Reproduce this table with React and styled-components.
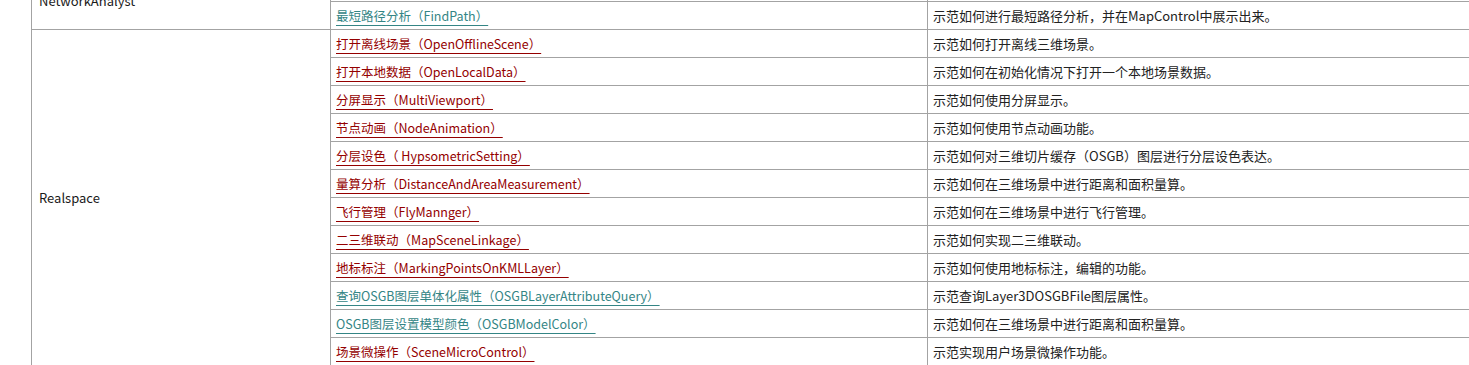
import React from "react";
import styled, { createGlobalStyle } from "styled-components";

const GlobalStyle = createGlobalStyle`
  html, body {
    margin: 0;
    padding: 0;
    background: #ffffff;
    overflow: hidden;
  }
  body {
    font-family: "Noto Sans CJK SC", "Noto Sans", sans-serif;
    font-size: 13px;
    color: #222222;
  }
`;

const Page = styled.div`
  padding-left: 31px;
  margin-top: -28px;
`;

const Table = styled.table`
  border-collapse: collapse;
  table-layout: fixed;
  width: 1520px;
`;

const Row = styled.tr`
  height: ${(p) => p.$h || 28}px;
`;

const Cell = styled.td`
  border: 1px solid #a3a3a3;
  padding: 0 5px;
  vertical-align: middle;
  line-height: 18px;
  white-space: nowrap;
  overflow: hidden;
`;

const GroupCell = styled(Cell)`
  padding-left: 7px;
  color: #1a1a1a;
`;

const DemoLink = styled.a`
  font-size: 12.5px;
  color: ${(p) => (p.$visited ? "#348585" : "#940000")};
  text-decoration: underline;
  text-decoration-thickness: 1px;
  text-underline-offset: 4px;
  cursor: pointer;
`;

const groups = [
  {
    name: "NetworkAnalyst",
    rows: [
      { title: "服务区分析（ServiceArea）", desc: "示范如何进行服务区分析。", visited: true, h: 29 },
      {
        title: "最短路径分析（FindPath）",
        desc: "示范如何进行最短路径分析，并在MapControl中展示出来。",
        visited: true,
      },
    ],
  },
  {
    name: "Realspace",
    rows: [
      { title: "打开离线场景（OpenOfflineScene）", desc: "示范如何打开离线三维场景。" },
      { title: "打开本地数据（OpenLocalData）", desc: "示范如何在初始化情况下打开一个本地场景数据。" },
      { title: "分屏显示（MultiViewport）", desc: "示范如何使用分屏显示。" },
      { title: "节点动画（NodeAnimation）", desc: "示范如何使用节点动画功能。" },
      {
        title: "分层设色（ HypsometricSetting）",
        desc: "示范如何对三维切片缓存（OSGB）图层进行分层设色表达。",
      },
      {
        title: "量算分析（DistanceAndAreaMeasurement）",
        desc: "示范如何在三维场景中进行距离和面积量算。",
      },
      { title: "飞行管理（FlyMannger）", desc: "示范如何在三维场景中进行飞行管理。" },
      { title: "二三维联动（MapSceneLinkage）", desc: "示范如何实现二三维联动。" },
      {
        title: "地标标注（MarkingPointsOnKMLLayer）",
        desc: "示范如何使用地标标注，编辑的功能。",
      },
      {
        title: "查询OSGB图层单体化属性（OSGBLayerAttributeQuery）",
        desc: "示范查询Layer3DOSGBFile图层属性。",
        visited: true,
      },
      {
        title: "OSGB图层设置模型颜色（OSGBModelColor）",
        desc: "示范如何在三维场景中进行距离和面积量算。",
        visited: true,
      },
      { title: "场景微操作（SceneMicroControl）", desc: "示范实现用户场景微操作功能。" },
    ],
  },
];

export default function App() {
  return (
    <>
      <GlobalStyle />
      <Page>
        <Table>
          <colgroup>
            <col style={{ width: 299 }} />
            <col style={{ width: 597 }} />
            <col />
          </colgroup>
          <tbody>
            {groups.map((g) =>
              g.rows.map((r, i) => (
                <Row key={g.name + i} $h={r.h}>
                  {i === 0 && <GroupCell rowSpan={g.rows.length}>{g.name}</GroupCell>}
                  <Cell>
                    <DemoLink $visited={r.visited}>{r.title}</DemoLink>
                  </Cell>
                  <Cell>{r.desc}</Cell>
                </Row>
              ))
            )}
          </tbody>
        </Table>
      </Page>
    </>
  );
}
